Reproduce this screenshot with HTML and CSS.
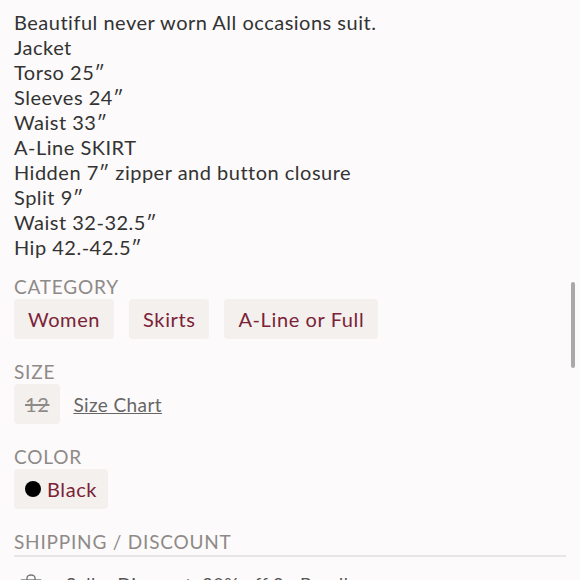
FILE: index.html
```html
<!DOCTYPE html>
<html lang="en">
<head>
    <meta charset="UTF-8">
    <title>Listing Details</title>
    <link rel="stylesheet" href="styles.css">
</head>
<body>
<div class="desc">
    Beautiful never worn All occasions suit.<br>
    Jacket<br>
    Torso 25″<br>
    Sleeves 24″<br>
    Waist 33″<br>
    A-Line SKIRT<br>
    Hidden 7″ zipper and button closure<br>
    Split 9″<br>
    Waist 32-32.5″<br>
    Hip 42.-42.5″
</div>

<div class="section first">
    <div class="label">Category</div>
    <div class="chips">
        <span class="chip">Women</span>
        <span class="chip">Skirts</span>
        <span class="chip">A-Line or Full</span>
    </div>
</div>

<div class="section">
    <div class="label">Size</div>
    <div class="chips">
        <span class="chip size">12</span>
        <a class="size-chart" href="#">Size Chart</a>
    </div>
</div>

<div class="section">
    <div class="label">Color</div>
    <div class="chips">
        <span class="chip color"><span class="dot"></span>Black</span>
    </div>
</div>

<div class="section">
    <div class="label ship">Shipping / Discount</div>
    <div class="ship-row">
        <svg class="bag" width="22" height="20" viewBox="0 0 22 20">
            <path d="M7 6 V4 a4 3 0 0 1 8 0 V6" fill="none" stroke="#777" stroke-width="1.4"/>
            <rect x="1.5" y="6" width="19" height="12" fill="none" stroke="#777" stroke-width="1.4"/>
            <line x1="1.5" y1="10" x2="20.5" y2="10" stroke="#777" stroke-width="1.4"/>
        </svg>
        <span class="ship-text">Seller Discount: 20% off 2+ Bundle</span>
        <span class="chev">›</span>
    </div>
</div>

<div class="scrollbar"></div>
</body>
</html>
```

FILE: styles.css
```css
body {
    font-family: Lato, "Noto Sans", sans-serif;
    background-color: #fcfafa;
    margin: 0;
    padding: 0 14px;
    height: 580px;
    overflow: hidden;
}

.desc {
    font-size: 20px;
    line-height: 25px;
    letter-spacing: 0.5px;
    color: #333;
    margin-top: 10px;
}

.section {
    margin-top: 21px;
}

.section.first {
    margin-top: 15px;
}

.label {
    font-size: 19px;
    line-height: 24px;
    letter-spacing: 0.8px;
    text-transform: uppercase;
    color: #8e8a88;
}

.chips {
    display: flex;
    align-items: center;
    gap: 15px;
}

.chip {
    display: flex;
    align-items: center;
    height: 40px;
    padding: 0 14px;
    font-size: 20px;
    letter-spacing: 0.6px;
    color: #7b2236;
    background: #f3f0ee;
    border-radius: 4px;
}

.chip.size {
    padding: 0 11px;
    color: #8e8a88;
    text-decoration: line-through;
}

.chip.color {
    padding-right: 11px;
}

.size-chart {
    font-size: 19px;
    letter-spacing: 0.4px;
    color: #666;
    text-decoration: underline;
    margin-left: -2px;
}

.dot {
    width: 16px;
    height: 16px;
    border-radius: 50%;
    background: #000;
    margin-left: -3px;
    margin-right: 6px;
}

.ship {
    border-bottom: 2px solid #e8e5e5;
    padding-bottom: 1px;
}

.ship-row {
    display: flex;
    align-items: center;
    padding: 12px 0 0 6px;
    font-size: 18px;
    letter-spacing: 0.5px;
    color: #555;
}

.bag {
    margin-right: 24px;
}

.ship-text {
    flex: 1;
}

.chev {
    color: #999;
    font-size: 24px;
    margin-right: 4px;
}

.scrollbar {
    position: absolute;
    top: 282px;
    right: 5px;
    width: 4px;
    height: 86px;
    background: #a9a9a9;
    border-radius: 2px;
}
```
